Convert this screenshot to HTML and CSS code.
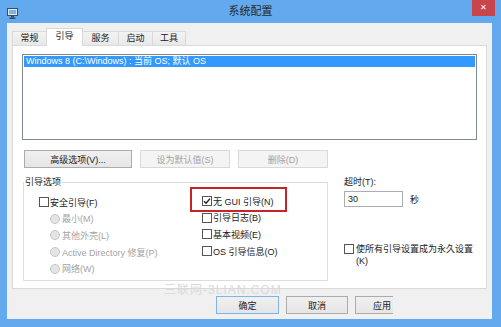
FILE: index.html
```html
<!DOCTYPE html>
<html lang="zh-CN">
<head>
    <meta charset="UTF-8">
    <title>系统配置</title>
    <link rel="stylesheet" href="styles.css">
</head>
<body>
    <div class="window">
        <div class="titlebar">
            <svg class="app-icon" width="11" height="11" viewBox="0 0 11 11">
                <rect x="0.5" y="0.5" width="10" height="7" fill="#dbe9f7" stroke="#3d4d5e"/>
                <rect x="2" y="2" width="7" height="4" fill="#7fb3e6"/>
                <rect x="4" y="8" width="3" height="1.5" fill="#3d4d5e"/>
                <rect x="2.5" y="9.5" width="6" height="1.5" fill="#3d4d5e"/>
            </svg>
            <div class="title">系统配置</div>
            <div class="close">✕</div>
        </div>

        <div class="client">
            <div class="tabs">
                <div class="tab t-first">常规</div>
                <div class="tab active">引导</div>
                <div class="tab">服务</div>
                <div class="tab">启动</div>
                <div class="tab t-last">工具</div>
            </div>

            <div class="panel">
                <div class="list">
                    <div class="list-row">Windows 8 (C:\Windows) : 当前 OS; 默认 OS</div>
                </div>

                <div class="btn-row">
                    <div class="btn wide">高级选项(V)...</div>
                    <div class="btn disabled">设为默认值(S)</div>
                    <div class="btn disabled">删除(D)</div>
                </div>

                <div class="options">
                    <div class="group">
                        <span class="group-title">引导选项</span>
                        <div class="group-cols">
                            <div class="col left">
                                <div class="opt"><span class="check"></span>安全引导(F)</div>
                                <div class="opt sub off"><span class="radio"></span>最小(M)</div>
                                <div class="opt sub off"><span class="radio"></span>其他外壳(L)</div>
                                <div class="opt sub off"><span class="radio"></span>Active Directory 修复(P)</div>
                                <div class="opt sub off"><span class="radio"></span>网络(W)</div>
                            </div>
                            <div class="col right">
                                <div class="opt marked">
                                    <span class="check">
                                        <svg width="8" height="8" viewBox="0 0 8 8"><path d="M1 4.2 L3.1 6.3 L7 1.6" fill="none" stroke="#222" stroke-width="1.4"/></svg>
                                    </span>无 GUI 引导(N)
                                </div>
                                <div class="opt"><span class="check"></span>引导日志(B)</div>
                                <div class="opt"><span class="check"></span>基本视频(E)</div>
                                <div class="opt"><span class="check"></span>OS 引导信息(O)</div>
                            </div>
                        </div>
                    </div>

                    <div class="side">
                        <div class="side-label">超时(T):</div>
                        <div class="timeout">
                            <div class="textbox">30</div>
                            <span>秒</span>
                        </div>
                        <div class="opt permanent"><span class="check"></span><span class="perm-text">使所有引导设置成为永久设置(K)</span></div>
                    </div>
                </div>
            </div>

            <div class="footer">
                <div class="btn fbtn default">确定</div>
                <div class="btn fbtn">取消</div>
                <div class="btn fbtn cut">应用</div>
            </div>
        </div>

        <div class="watermark">三联网-3LIAN.COM</div>
    </div>
</body>
</html>
```

FILE: styles.css
```css
body {
    margin: 0;
    padding: 0;
    background: #63a9ee;
    font-family: "Liberation Sans", "Noto Sans CJK SC", sans-serif;
    font-size: 9px;
    color: #1a1a1a;
    overflow: hidden;
}
.window {
    position: relative;
    width: 501px;
    height: 327px;
}
.titlebar {
    height: 23px;
    display: grid;
    grid-template-columns: 1fr auto 1fr;
    align-items: start;
}
.app-icon {
    margin: 8px 0 0 7px;
}
.title {
    font-size: 11px;
    color: #2a2a2a;
    padding-top: 5px;
    line-height: 13px;
}
.close {
    justify-self: end;
    margin-right: 6px;
    width: 23px;
    height: 16px;
    background: #c8464b;
    color: #fff;
    font-size: 8px;
    line-height: 16px;
    text-align: center;
}
.client {
    margin: 0 9px 0 7px;
    height: 296px;
    box-sizing: border-box;
    background: #f0f0f0;
    padding: 6px 5px 0 5px;
}

/* tabs */
.tabs {
    display: flex;
    align-items: flex-end;
    height: 16px;
}
.tab {
    height: 14px;
    width: 34px;
    box-sizing: border-box;
    border: 1px solid #d9d9d9;
    border-bottom: none;
    border-right: none;
    background: linear-gradient(#f3f3f3, #e8e8e8);
    line-height: 13px;
    text-align: center;
}
.tab.t-last {
    border-right: 1px solid #d9d9d9;
}
.tab.active {
    position: relative;
    z-index: 1;
    width: 37px;
    height: 18px;
    margin-bottom: -1px;
    background: #fff;
    border-right: 1px solid #d9d9d9;
    line-height: 15px;
}
.tab.active + .tab {
    border-left: none;
    width: 35px;
}

.panel {
    height: 244px;
    box-sizing: border-box;
    border: 1px solid #d9d9d9;
    background: #fff;
    padding: 8px 9px 0 9px;
}
.list {
    height: 86px;
    box-sizing: border-box;
    border: 1px solid #828790;
    padding: 1px;
}
.list-row {
    height: 11px;
    line-height: 11px;
    background: #3399ff;
    color: #fff;
    padding-left: 2px;
}

/* buttons */
.btn-row {
    display: flex;
    gap: 8px;
    margin: 10px 0 0 2px;
}
.btn {
    height: 18px;
    width: 90px;
    box-sizing: border-box;
    border: 1px solid #acacac;
    background: linear-gradient(#f0f0f0, #e5e5e5);
    display: flex;
    align-items: center;
    justify-content: center;
    white-space: nowrap;
}
.btn.wide {
    width: 108px;
}
.btn.disabled {
    border-color: #d9d9d9;
    background: #f4f4f4;
    color: #a3a3a3;
}

/* options */
.options {
    display: flex;
    margin-top: 8px;
}
.group {
    width: 305px;
    height: 99px;
    box-sizing: border-box;
    margin: 6px 0 0 1px;
    border: 1px solid #dcdcdc;
}
.group-title {
    display: block;
    width: fit-content;
    margin: -7px 0 0 0;
    padding: 0 1px;
    background: #fff;
    line-height: 12px;
}
.group-cols {
    display: flex;
    margin-top: 6px;
    padding-left: 15px;
}
.col.left {
    width: 163px;
}
.col.right {
    margin-top: -1px;
}
.opt {
    height: 16.6px;
    display: flex;
    align-items: center;
    white-space: nowrap;
}
.opt.sub {
    padding-left: 11px;
}
.opt.off {
    color: #a3a3a3;
}
.check {
    width: 10px;
    height: 10px;
    box-sizing: border-box;
    border: 1px solid #555;
    background: #fff;
    margin-right: 1px;
    display: flex;
    align-items: center;
    justify-content: center;
    flex-shrink: 0;
}
.radio {
    width: 10px;
    height: 10px;
    box-sizing: border-box;
    border: 1px solid #c6c6c6;
    border-radius: 50%;
    background: #e4e4e4;
    margin-right: 2px;
}
.marked {
    position: relative;
}
.marked::after {
    content: "";
    position: absolute;
    left: -12px;
    top: -6px;
    width: 97px;
    height: 25px;
    box-sizing: border-box;
    border: 2px solid #c4252b;
}

.side {
    margin-left: 16px;
}
.side-label {
    line-height: 12px;
}
.timeout {
    display: flex;
    align-items: center;
    gap: 7px;
    margin-top: 3px;
}
.textbox {
    width: 59px;
    height: 16px;
    box-sizing: border-box;
    border: 1px solid #abadb3;
    padding-left: 3px;
    line-height: 14px;
}
.opt.permanent {
    height: auto;
    align-items: flex-start;
    white-space: normal;
    margin-top: 36px;
}
.permanent .check {
    margin: 1px 2px 0 0;
}
.perm-text {
    width: 120px;
    line-height: 12px;
}

/* footer */
.footer {
    display: flex;
    gap: 7px;
    margin-top: 7px;
    padding-left: 204px;
}
.btn.fbtn {
    width: 62px;
}
.btn.default {
    width: 63px;
    border-color: #7eb4ea;
}
.btn.cut {
    width: 38px;
    border-right: none;
    justify-content: flex-start;
    padding-left: 17px;
}

.watermark {
    position: absolute;
    left: 164px;
    top: 280px;
    font-size: 12px;
    letter-spacing: 1px;
    color: #dadada;
}
```
